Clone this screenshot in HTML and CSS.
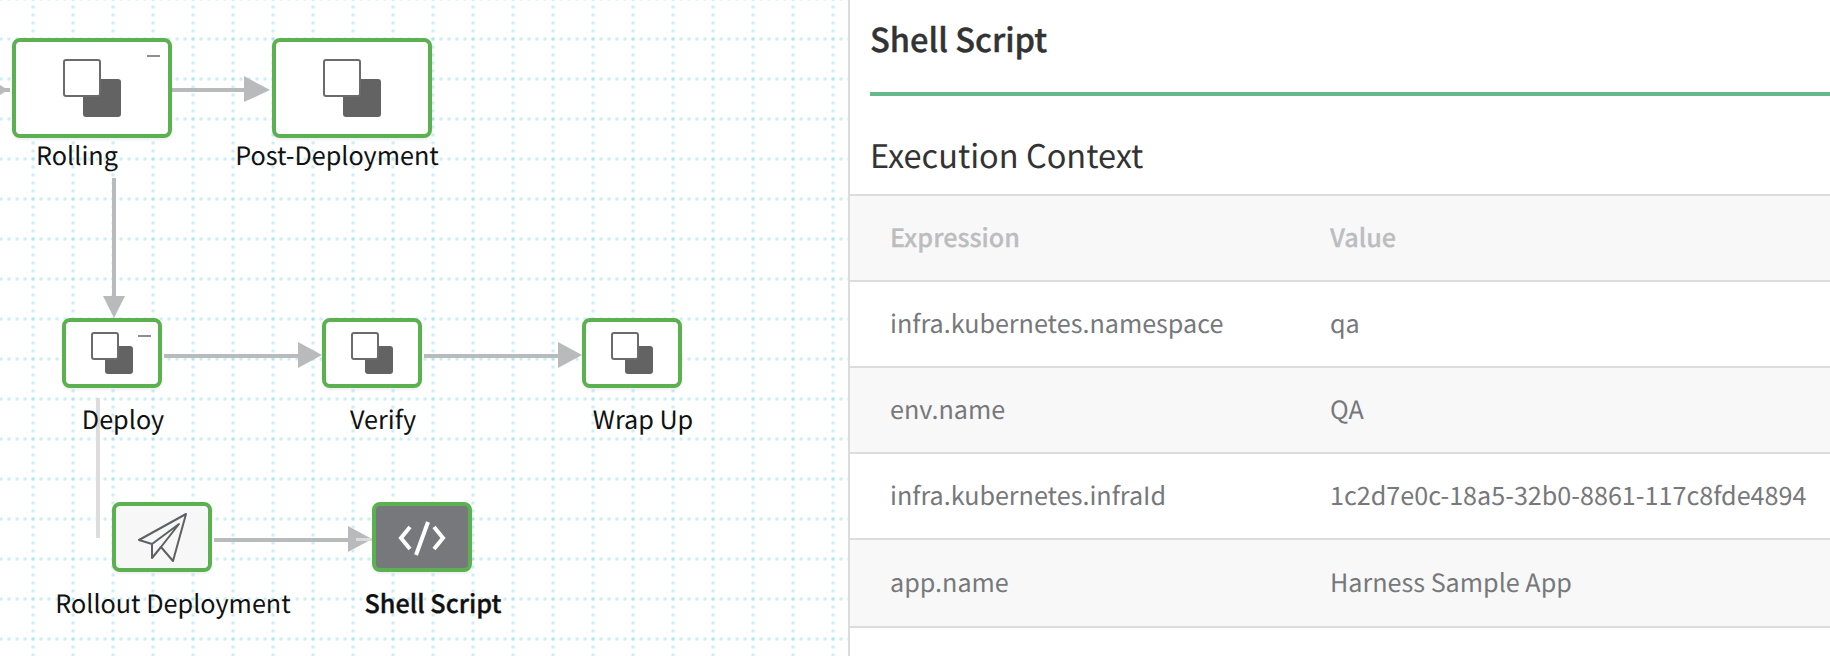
FILE: index.html
```html
<!DOCTYPE html>
<html lang="en">
<head>
<meta charset="utf-8">
<title>Shell Script</title>
<link rel="stylesheet" href="styles.css">
</head>
<body>
<main class="page">
  <section class="canvas">
    <svg class="edges" width="848" height="656" viewBox="0 0 848 656">
      <g class="edge">
        <polygon points="0,85 8,90 0,95"/>
        <rect x="0" y="88" width="10" height="4"/>
        <rect x="170" y="88" width="76" height="4"/>
        <polygon points="244,76 270,90 244,102"/>
        <rect x="112" y="178" width="4" height="122"/>
        <polygon points="103,296 125,296 114,318"/>
        <rect x="164" y="354" width="136" height="4"/>
        <polygon points="298,342 322,355 298,368"/>
        <rect x="424" y="354" width="136" height="4"/>
        <polygon points="558,342 582,355 558,368"/>
        <rect x="214" y="538" width="136" height="4"/>
        <polygon points="348,526 372,539 348,552"/>
      </g>
      <g class="edge-light">
        <rect x="96" y="398" width="4" height="140"/>
        <rect x="356" y="538" width="16" height="3"/>
      </g>
    </svg>

    <div class="node node-large n-rolling">
      <span class="stack"><i class="sq-back"></i><i class="sq-front"></i></span>
      <i class="minus"></i>
    </div>
    <div class="label n-rolling-label">Rolling</div>

    <div class="node node-large n-post">
      <span class="stack"><i class="sq-back"></i><i class="sq-front"></i></span>
    </div>
    <div class="label n-post-label">Post-Deployment</div>

    <div class="node node-small n-deploy">
      <span class="stack"><i class="sq-back"></i><i class="sq-front"></i></span>
      <i class="minus"></i>
    </div>
    <div class="label n-deploy-label">Deploy</div>

    <div class="node node-small n-verify">
      <span class="stack"><i class="sq-back"></i><i class="sq-front"></i></span>
    </div>
    <div class="label n-verify-label">Verify</div>

    <div class="node node-small n-wrap">
      <span class="stack"><i class="sq-back"></i><i class="sq-front"></i></span>
    </div>
    <div class="label n-wrap-label">Wrap Up</div>

    <div class="node node-small node-muted n-rollout">
      <svg class="icon" width="92" height="62" viewBox="0 0 92 62">
        <g class="plane">
          <path d="M70 8 L23 34 L36 38 L36 52 L45 41 L57 55 Z"/>
          <path d="M36 38 L63 18 L45 41"/>
        </g>
      </svg>
    </div>
    <div class="label n-rollout-label">Rollout Deployment</div>

    <div class="node node-small node-dark n-shell">
      <svg class="icon" width="92" height="62" viewBox="0 0 92 62">
        <g class="code">
          <path d="M34 21 L25 32 L34 43"/>
          <path d="M58 21 L67 32 L58 43"/>
          <path d="M52 16 L40 49"/>
        </g>
      </svg>
    </div>
    <div class="label label-strong n-shell-label">Shell Script</div>
  </section>

  <aside class="panel">
    <header class="panel-head">
      <h1 class="panel-title">Shell Script</h1>
    </header>
    <h2 class="section-title">Execution Context</h2>
    <div class="table">
      <div class="row row-head"><span class="cell-key">Expression</span><span class="cell-val">Value</span></div>
      <div class="row"><span class="cell-key">infra.kubernetes.namespace</span><span class="cell-val">qa</span></div>
      <div class="row row-alt"><span class="cell-key">env.name</span><span class="cell-val">QA</span></div>
      <div class="row"><span class="cell-key">infra.kubernetes.infraId</span><span class="cell-val">1c2d7e0c-18a5-32b0-8861-117c8fde4894</span></div>
      <div class="row row-alt row-last"><span class="cell-key">app.name</span><span class="cell-val">Harness Sample App</span></div>
    </div>
  </aside>
</main>
</body>
</html>
```
FILE: styles.css
```css
* { box-sizing: border-box; }
html, body { margin: 0; padding: 0; height: 100%; overflow: hidden; background: #fff; }
body {
  font-family: "Noto Sans CJK SC", "Noto Sans CJK JP", "Noto Sans", sans-serif;
  text-rendering: geometricPrecision;
}

.page { display: flex; width: 1830px; height: 656px; }

.canvas {
  position: relative;
  flex: 0 0 848px;
  height: 656px;
  overflow: hidden;
  background-color: #fff;
  background-image:
    radial-gradient(circle at 4px 4px, rgba(130, 215, 240, .6) 0, rgba(130, 215, 240, .1) 2px, transparent 2.6px),
    radial-gradient(circle at 4px 4px, rgba(130, 215, 240, .6) 0, rgba(130, 215, 240, .1) 2px, transparent 2.6px);
  background-size: 8px 40px, 40px 8px;
  background-position: -3px 35px, 29px 3px;
}

.edges { position: absolute; left: 0; top: 0; }
.edge { fill: #b9babc; }
.edge-light { fill: #dcdcdc; }

.node {
  position: absolute;
  display: flex;
  align-items: center;
  justify-content: center;
  background: #fff;
  border: 4px solid #5bb04f;
  border-radius: 8px;
  box-shadow: 0 2px 3px rgba(0, 0, 0, .07);
}
.node-large { width: 160px; height: 100px; }
.node-small { width: 100px; height: 70px; }
.node-muted { background: #f7f7f7; }
.node-dark { background: #77787b; }

.n-rolling { left: 12px; top: 38px; }
.n-post { left: 272px; top: 38px; }
.n-deploy { left: 62px; top: 318px; }
.n-verify { left: 322px; top: 318px; }
.n-wrap { left: 582px; top: 318px; }
.n-rollout { left: 112px; top: 502px; }
.n-shell { left: 372px; top: 502px; }

.stack { position: relative; display: block; }
.node-large .stack { width: 58px; height: 58px; }
.node-small .stack { width: 42px; height: 42px; }
.sq-back, .sq-front { position: absolute; display: block; border-radius: 3px; }
.sq-front { right: 0; bottom: 0; background: #636363; }
.sq-back { left: 0; top: 0; z-index: 1; background: #fff; border: 2px solid #6b6b6b; }
.node-large .sq-back, .node-large .sq-front { width: 38px; height: 38px; }
.node-small .sq-back, .node-small .sq-front { width: 28px; height: 28px; }

.minus { position: absolute; display: block; height: 2px; background: #8d8e90; }
.node-large .minus { right: 8px; top: 13px; width: 13px; }
.node-small .minus { right: 7px; top: 13px; width: 13px; }

.icon { display: block; }
.plane { fill: none; stroke: #5f6062; stroke-width: 2; stroke-linejoin: round; }
.code { fill: none; stroke: #fff; stroke-width: 4; }

.label {
  position: absolute;
  width: 320px;
  height: 32px;
  line-height: 32px;
  font-size: 25.2px;
  text-align: center;
  color: #111;
  white-space: nowrap;
}
.label-strong { font-weight: 500; -webkit-text-stroke: .35px #111; }
.n-rolling-label { left: -83px; top: 139px; }
.n-post-label { left: 177px; top: 139px; }
.n-deploy-label { left: -37px; top: 403px; }
.n-verify-label { left: 223px; top: 403px; }
.n-wrap-label { left: 483px; top: 403px; }
.n-rollout-label { left: 13px; top: 587px; }
.n-shell-label { left: 273px; top: 587px; }

.panel {
  flex: 1 1 auto;
  min-width: 0;
  border-left: 2px solid #dcdcdc;
  background: #fff;
}
.panel-head { margin-left: 20px; height: 96px; border-bottom: 4px solid #66b98a; }
.panel-title {
  margin: 0;
  padding-top: 18px;
  font-size: 32.6px;
  line-height: 42px;
  font-weight: 500;
  color: #333;
  -webkit-text-stroke: .4px #333;
}
.section-title {
  margin: 0;
  padding: 38px 0 0 20px;
  height: 98px;
  font-size: 32.5px;
  line-height: 42px;
  font-weight: 400;
  color: #333;
}
.table { border-top: 2px solid #dcdcdc; }
.row {
  display: flex;
  align-items: center;
  height: 86px;
  padding: 0 0 2px 40px;
  font-size: 25.15px;
  color: #77787b;
  border-bottom: 2px solid #dcdcdc;
  background: #fff;
}
.row-alt { background: #f8f8f8; }
.row-last { height: 88px; }
.row-head { height: 86px; background: #f8f8f8; font-weight: 500; color: #bcbdbf; -webkit-text-stroke: .3px #bcbdbf; }
.cell-key { flex: 0 0 440px; }
.cell-val { flex: 1 1 auto; }
```
